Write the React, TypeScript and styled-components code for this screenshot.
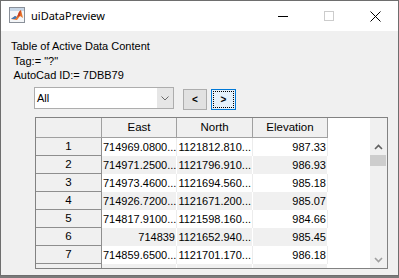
import React from "react";
import styled, { createGlobalStyle } from "styled-components";

const GlobalStyle = createGlobalStyle`
  html, body { margin: 0; padding: 0; background: #7a7a7a; }
  body { font-family: "Liberation Sans", Arial, sans-serif; }
`;

const Window = styled.div`
  width: 399px;
  height: 276px;
  box-sizing: border-box;
  border: 1px solid #6e6e6e;
  display: flex;
  flex-direction: column;
  background: #f0f0f0;
  overflow: hidden;
`;

const TitleBar = styled.div`
  height: 30px;
  flex: none;
  background: #ffffff;
  display: flex;
  align-items: stretch;
`;

const AppIcon = styled.div`
  width: 16px;
  height: 16px;
  margin: 6px 6px 0 8px;
  flex: none;
`;

const TitleText = styled.div`
  font-family: "Noto Sans", "Segoe UI", sans-serif;
  font-size: 11px;
  line-height: 30px;
  color: #000;
  flex: 1;
  padding-top: 0px;
`;

const CaptionButton = styled.div`
  width: 46px;
  display: flex;
  align-items: center;
  justify-content: center;
`;

const Body = styled.div`
  flex: 1;
  display: flex;
  flex-direction: column;
  font-size: 11px;
  color: #000;
`;

const InfoBlock = styled.div`
  margin: 8px 0 0 10px;
  height: 44px;
`;

const InfoLine = styled.div`
  line-height: 14.5px;
  white-space: pre;
`;

const Controls = styled.div`
  margin: 4px 0 0 33px;
  display: flex;
  align-items: flex-start;
  height: 23px;
`;

const Select = styled.div`
  width: 140px;
  height: 22px;
  box-sizing: border-box;
  border: 1px solid #adadad;
  background: #fff;
  display: flex;
`;

const SelectValue = styled.div`
  flex: 1;
  padding-left: 2px;
  line-height: 20px;
`;

const SelectArrow = styled.div`
  width: 16px;
  background: #e6e6e6;
  display: flex;
  align-items: center;
  justify-content: center;
`;

const NavButton = styled.div<{ $focused?: boolean }>`
  position: relative;
  width: ${(p) => (p.$focused ? 25 : 24)}px;
  height: 21px;
  margin: 2px 0 0 ${(p) => (p.$focused ? 4 : 9)}px;
  box-sizing: border-box;
  border: 1px solid ${(p) => (p.$focused ? "#0078d7" : "#adadad")};
  background: ${(p) => (p.$focused ? "#e5f1fb" : "#e1e1e1")};
  display: flex;
  align-items: center;
  justify-content: center;
  font-weight: bold;
  font-size: 10px;
  line-height: 1;
  &::after {
    content: "";
    display: ${(p) => (p.$focused ? "block" : "none")};
    position: absolute;
    inset: 1px;
    border: 1px dotted #000;
  }
`;

const TableFrame = styled.div`
  margin: 7px 0 0 34px;
  width: 353px;
  height: 152px;
  box-sizing: border-box;
  border: 1px solid #828282;
  display: flex;
  background: #fff;
  overflow: hidden;
`;

const Grid = styled.div`
  width: 334px;
  display: flex;
  flex-direction: column;
`;

const Row = styled.div<{ $h: number }>`
  display: flex;
  height: ${(p) => p.$h}px;
  flex: none;
`;

const HeadCell = styled.div<{ $w: number }>`
  width: ${(p) => p.$w}px;
  box-sizing: border-box;
  border-right: 1px solid #a0a0a0;
  border-bottom: 1px solid #a0a0a0;
  background: #f0f0f0;
  text-align: center;
  line-height: 19px;
  font-size: 11.5px;
`;

const HeadFill = styled.div`
  flex: 1;
`;

const RowHead = styled.div`
  width: 66px;
  box-sizing: border-box;
  border-right: 1px solid #8e8e8e;
  border-bottom: 1px solid #8e8e8e;
  background: #f0f0f0;
  text-align: center;
  line-height: 17px;
  font-size: 11.5px;
`;

const DataCell = styled.div<{ $w: number; $alt: boolean }>`
  width: ${(p) => p.$w}px;
  box-sizing: border-box;
  padding: 0 1px 0 1px;
  border-right: 1px solid ${(p) => (p.$alt ? "#ffffff" : "#ececec")};
  background: ${(p) => (p.$alt ? "#f0f0f0" : "#ffffff")};
  text-align: right;
  line-height: 18px;
  white-space: nowrap;
  overflow: hidden;
`;

const Scrollbar = styled.div`
  width: 17px;
  display: flex;
  flex-direction: column;
  background: #f0f0f0;
`;

const ScrollHeadSpacer = styled.div`
  height: 20px;
  flex: none;
`;

const ScrollButton = styled.div`
  height: 17px;
  flex: none;
  display: flex;
  align-items: center;
  justify-content: center;
`;

const ScrollTrack = styled.div`
  flex: 1;
  display: flex;
  flex-direction: column;
`;

const ScrollThumb = styled.div`
  height: 11px;
  margin: 0 1px 0 0;
  background: #cdcdcd;
`;

const rows = [
  ["1", "714969.0800...", "1121812.810...", "987.33"],
  ["2", "714971.2500...", "1121796.910...", "986.93"],
  ["3", "714973.4600...", "1121694.560...", "985.18"],
  ["4", "714926.7200...", "1121671.200...", "985.07"],
  ["5", "714817.9100...", "1121598.160...", "984.66"],
  ["6", "714839", "1121652.940...", "985.45"],
  ["7", "714859.6500...", "1121701.170...", "986.18"],
  ["", "", "", ""],
];

const widths = [75, 76, 75];

const MatlabIcon = () => (
  <svg width="16" height="16" viewBox="0 0 16 16">
    <rect x="0.5" y="0.5" width="15" height="15" fill="#f4f6f8" stroke="#8a9099" />
    <rect x="1" y="1" width="14" height="3" fill="#c7d6e6" />
    <path d="M2 12 L6 9 L8 10 L10 5 L12 3 L14 11 L11 9 L8 13 Z" fill="#e8772e" />
    <path d="M2 12 L6 9 L8 10 L6 12 Z" fill="#3a7bbf" />
    <path d="M10 5 L12 3 L11 9 L8 10 Z" fill="#c9421f" />
  </svg>
);

export default function App() {
  return (
    <>
      <GlobalStyle />
      <Window>
        <TitleBar>
          <AppIcon>
            <MatlabIcon />
          </AppIcon>
          <TitleText>uiDataPreview</TitleText>
          <CaptionButton>
            <svg width="10" height="10" viewBox="0 0 10 10">
              <line x1="0" y1="5.5" x2="10" y2="5.5" stroke="#000" strokeWidth="1" />
            </svg>
          </CaptionButton>
          <CaptionButton>
            <svg width="10" height="10" viewBox="0 0 10 10">
              <rect x="0.5" y="0.5" width="9" height="9" fill="none" stroke="#cccccc" strokeWidth="1" />
            </svg>
          </CaptionButton>
          <CaptionButton>
            <svg width="11" height="11" viewBox="0 0 11 11">
              <path d="M0.5 0.5 L10.5 10.5 M10.5 0.5 L0.5 10.5" stroke="#000" strokeWidth="1" />
            </svg>
          </CaptionButton>
        </TitleBar>
        <Body>
          <InfoBlock>
            <InfoLine>Table of Active Data Content</InfoLine>
            <InfoLine>{' Tag:= "?"'}</InfoLine>
            <InfoLine>{" AutoCad ID:= 7DBB79"}</InfoLine>
          </InfoBlock>
          <Controls>
            <Select>
              <SelectValue>All</SelectValue>
              <SelectArrow>
                <svg width="8" height="5" viewBox="0 0 8 5">
                  <path d="M0.5 0.5 L4 4 L7.5 0.5" fill="none" stroke="#6a6a6a" strokeWidth="1" />
                </svg>
              </SelectArrow>
            </Select>
            <NavButton>&lt;</NavButton>
            <NavButton $focused>&gt;</NavButton>
          </Controls>
          <TableFrame>
            <Grid>
              <Row $h={20}>
                <HeadCell $w={66} />
                <HeadCell $w={75}>East</HeadCell>
                <HeadCell $w={76}>North</HeadCell>
                <HeadCell $w={75}>Elevation</HeadCell>
                <HeadFill />
              </Row>
              {rows.map((r, i) => (
                <Row $h={18} key={i}>
                  <RowHead>{r[0]}</RowHead>
                  {r.slice(1).map((v, j) => (
                    <DataCell key={j} $w={widths[j]} $alt={i % 2 === 1}>
                      {v}
                    </DataCell>
                  ))}
                  <HeadFill />
                </Row>
              ))}
            </Grid>
            <Scrollbar>
              <ScrollHeadSpacer />
              <ScrollButton>
                <svg width="9" height="6" viewBox="0 0 9 6">
                  <path d="M1 5 L4.5 1.5 L8 5" fill="none" stroke="#606060" strokeWidth="1.6" />
                </svg>
              </ScrollButton>
              <ScrollTrack>
                <ScrollThumb />
              </ScrollTrack>
              <ScrollButton>
                <svg width="9" height="6" viewBox="0 0 9 6">
                  <path d="M1 1 L4.5 4.5 L8 1" fill="none" stroke="#a0a0a0" strokeWidth="1.6" />
                </svg>
              </ScrollButton>
            </Scrollbar>
          </TableFrame>
        </Body>
      </Window>
    </>
  );
}
